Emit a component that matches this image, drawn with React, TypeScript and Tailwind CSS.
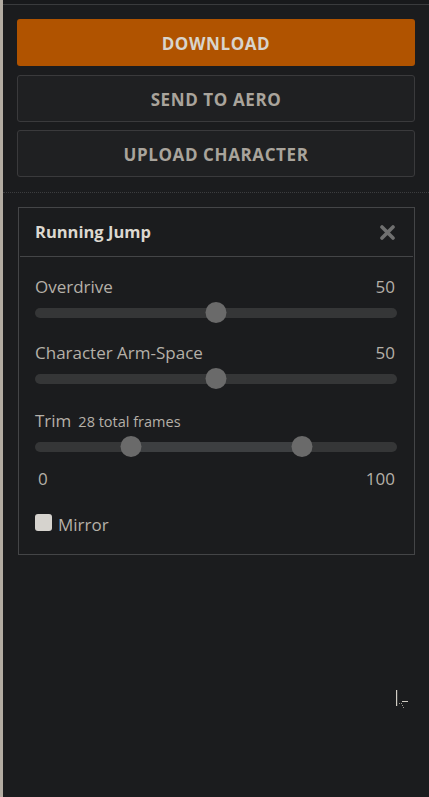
import React from 'react';

const font = { fontFamily: '"Open Sans", "Noto Sans", sans-serif' };

const Slider: React.FC<{ thumbs: number[]; range?: boolean }> = ({ thumbs, range }) => {
  return (
    <div className="relative h-[21px] flex items-center">
      <div className="h-[10px] w-full rounded-full bg-[#353637]" />
      {range && (
        <div
          className="absolute h-[10px] bg-[#3d3f41]"
          style={{ left: `${thumbs[0]}%`, width: `${thumbs[1] - thumbs[0]}%` }}
        />
      )}
      {thumbs.map((t) => (
        <div
          key={t}
          className="absolute top-0 h-[21px] w-[21px] -translate-x-1/2 rounded-full bg-[#6a6a6a]"
          style={{ left: `${t}%` }}
        />
      ))}
    </div>
  );
};

const Row: React.FC<{ label: string; value: string }> = ({ label, value }) => (
  <div className="flex items-center justify-between pr-px text-[17px] leading-[24px] text-[#b5b0a8]">
    <span>{label}</span>
    <span>{value}</span>
  </div>
);

export default function App() {
  return (
    <div className="flex h-[797px] w-full overflow-hidden" style={font}>
      <div className="w-[3px] shrink-0 bg-[#b3aca2]" />
      <div className="relative flex flex-1 flex-col bg-[#1b1c1e]">
        <div className="h-[4px] bg-[#18191b]" />
        <div className="h-px bg-[#3a3b3d]" />

        <div className="flex flex-col px-[14px] pt-[14px]">
          <button className="h-[47px] rounded-[3px] bg-[#b05300] pt-[2px] text-[17px] font-bold tracking-[0.6px] text-[#d8d4cc]">
            DOWNLOAD
          </button>
          <button className="mt-[9px] h-[47px] rounded-[3px] border border-[#3a3a3c] bg-[#1f2022] pt-[2px] text-[17px] font-bold tracking-[0.6px] text-[#a9a49c]">
            SEND TO AERO
          </button>
          <button className="mt-[8px] h-[47px] rounded-[3px] border border-[#3a3a3c] bg-[#1f2022] pt-[2px] text-[17px] font-bold tracking-[0.6px] text-[#a9a49c]">
            UPLOAD CHARACTER
          </button>
        </div>

        <div className="mt-[15px] border-t border-dotted border-[#3c3d3f]" />

        <div className="ml-[15px] mr-[14px] mt-[14px] border border-[#444547]">
          <div className="mx-px flex h-[49px] items-center justify-between border-b border-[#444547] pl-[15px] pr-[18px]">
            <span className="text-[16.5px] font-bold text-[#dcd8d0]">Running Jump</span>
            <svg width="15" height="15" viewBox="0 0 15 15">
              <path d="M2 2 L13 13 M13 2 L2 13" stroke="#707070" strokeWidth="3.6" strokeLinecap="round" />
            </svg>
          </div>

          <div className="flex flex-col pl-[16px] pr-[18px] pb-[17px] pt-[18px]">
            <Row label="Overdrive" value="50" />
            <div className="mt-[3px] mr-[-1px]">
              <Slider thumbs={[50]} />
            </div>

            <div className="mt-[18px]">
              <Row label="Character Arm-Space" value="50" />
            </div>
            <div className="mt-[3px] mr-[-1px]">
              <Slider thumbs={[50]} />
            </div>

            <div className="mt-[20px] flex items-baseline gap-[7px] text-[#b5b0a8]">
              <span className="text-[17px] leading-[24px]">Trim</span>
              <span className="text-[14.5px]">28 total frames</span>
            </div>
            <div className="mt-[3px] mr-[-1px]">
              <Slider thumbs={[26.5, 73.8]} range />
            </div>

            <div className="mt-[10px] flex justify-between pl-[3px] pr-px text-[17px] leading-[24px] text-[#b5b0a8]">
              <span>0</span>
              <span>100</span>
            </div>

            <div className="mt-[22px] flex items-center gap-[6px]">
              <div className="h-[17px] w-[17px] -translate-y-[3px] rounded-[3px] bg-[#d6d3ce]" />
              <span className="text-[17px] leading-[24px] text-[#b5b0a8]">Mirror</span>
            </div>
          </div>
        </div>

        <svg className="absolute left-[391px] top-[688px]" width="16" height="22" viewBox="0 0 16 22">
          <rect x="2" y="2" width="1.2" height="16" fill="#d0ccc4" />
          <rect x="8" y="13" width="6" height="1" fill="#d0ccc4" />
          <rect x="5" y="15" width="1" height="1" fill="#9a968f" />
          <rect x="7" y="15" width="1" height="1" fill="#9a968f" />
          <rect x="8" y="17" width="1" height="1" fill="#9a968f" />
          <rect x="9" y="19" width="1" height="1" fill="#9a968f" />
        </svg>
      </div>
    </div>
  );
}
